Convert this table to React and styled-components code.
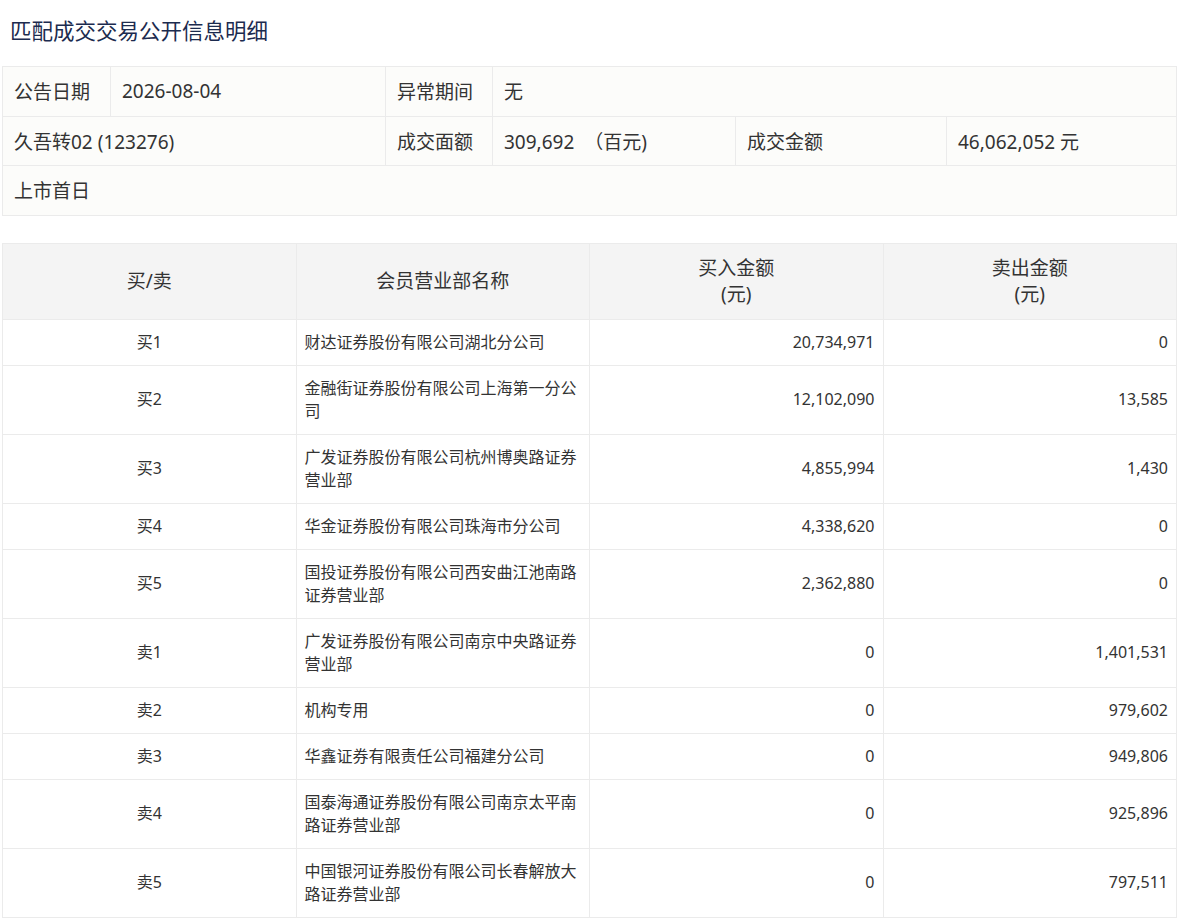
import React from "react";
import styled, { createGlobalStyle } from "styled-components";

const Global = createGlobalStyle`
  html, body { margin: 0; padding: 0; background: #fff; }
  body {
    font-family: "Noto Sans", "Noto Sans CJK SC", sans-serif;
    color: #333;
  }
`;

const Page = styled.div`
  padding: 0 5px 8px 2px;
`;

const Title = styled.h1`
  margin: 0 0 20px 0;
  padding: 16px 0 0 8px;
  font-size: 21.5px;
  line-height: 30px;
  font-weight: 400;
  color: #1c2b4f;
`;

const InfoGrid = styled.div`
  display: grid;
  grid-template-columns: 108px 275px 107px 243px 211px 1fr;
  border-top: 1px solid #ebebeb;
  border-left: 1px solid #ebebeb;
  background: #fcfcfa;
`;

const InfoCell = styled.div`
  grid-column: span ${(p) => p.$span || 1};
  display: flex;
  align-items: center;
  height: 48.5px;
  padding: 0 11px;
  border-right: 1px solid #ebebeb;
  border-bottom: 1px solid #ebebeb;
  font-size: 19px;
  color: #333;
  white-space: nowrap;
`;

const Table = styled.table`
  width: 100%;
  margin-top: 27px;
  border-collapse: collapse;
  table-layout: fixed;
  border: 1px solid #ebebeb;
`;

const Th = styled.th`
  height: 75px;
  padding: 0 8px;
  background: #f4f4f4;
  border: 1px solid #ebebeb;
  font-size: 19px;
  line-height: 26px;
  font-weight: 400;
  color: #333;
  text-align: center;
  vertical-align: middle;
`;

const Td = styled.td`
  padding: 11px 8px;
  border: 1px solid #ebebeb;
  font-size: 16px;
  line-height: 23px;
  color: #333;
  text-align: ${(p) => p.$align || "left"};
  vertical-align: middle;
`;

const rows = [
  ["买1", "财达证券股份有限公司湖北分公司", "20,734,971", "0"],
  ["买2", "金融街证券股份有限公司上海第一分公司", "12,102,090", "13,585"],
  ["买3", "广发证券股份有限公司杭州博奥路证券营业部", "4,855,994", "1,430"],
  ["买4", "华金证券股份有限公司珠海市分公司", "4,338,620", "0"],
  ["买5", "国投证券股份有限公司西安曲江池南路证券营业部", "2,362,880", "0"],
  ["卖1", "广发证券股份有限公司南京中央路证券营业部", "0", "1,401,531"],
  ["卖2", "机构专用", "0", "979,602"],
  ["卖3", "华鑫证券有限责任公司福建分公司", "0", "949,806"],
  ["卖4", "国泰海通证券股份有限公司南京太平南路证券营业部", "0", "925,896"],
  ["卖5", "中国银河证券股份有限公司长春解放大路证券营业部", "0", "797,511"],
];

export default function App() {
  return (
    <Page>
      <Global />
      <Title>匹配成交交易公开信息明细</Title>
      <InfoGrid>
        <InfoCell>公告日期</InfoCell>
        <InfoCell>2026-08-04</InfoCell>
        <InfoCell>异常期间</InfoCell>
        <InfoCell $span={3}>无</InfoCell>

        <InfoCell $span={2}>久吾转02 (123276)</InfoCell>
        <InfoCell>成交面额</InfoCell>
        <InfoCell>309,692 &nbsp;（百元)</InfoCell>
        <InfoCell>成交金额</InfoCell>
        <InfoCell>46,062,052 元</InfoCell>

        <InfoCell $span={6}>上市首日</InfoCell>
      </InfoGrid>

      <Table>
        <thead>
          <tr>
            <Th>买/卖</Th>
            <Th>会员营业部名称</Th>
            <Th>
              买入金额
              <br />
              (元)
            </Th>
            <Th>
              卖出金额
              <br />
              (元)
            </Th>
          </tr>
        </thead>
        <tbody>
          {rows.map((r) => (
            <tr key={r[0]}>
              <Td $align="center">{r[0]}</Td>
              <Td>{r[1]}</Td>
              <Td $align="right">{r[2]}</Td>
              <Td $align="right">{r[3]}</Td>
            </tr>
          ))}
        </tbody>
      </Table>
    </Page>
  );
}
